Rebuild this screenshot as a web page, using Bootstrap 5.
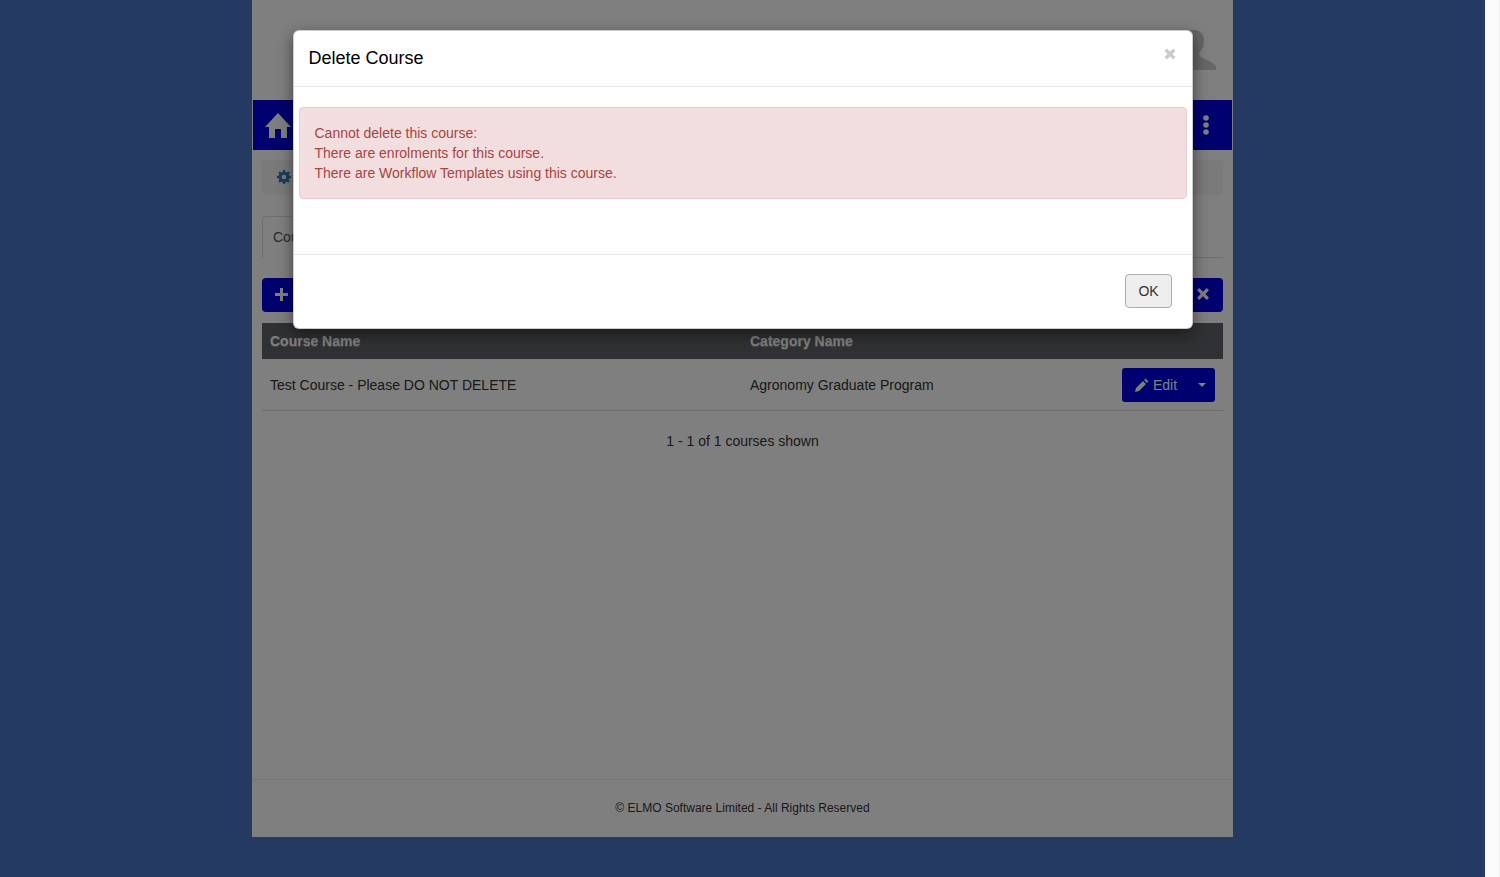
<!DOCTYPE html>
<html lang="en">
<head>
    <meta charset="UTF-8">
    <title>Delete Course</title>
    <link href="https://cdn.jsdelivr.net/npm/bootstrap@5.3.0/dist/css/bootstrap.min.css" rel="stylesheet">
    <style>
        html, body { height: 100%; overflow: hidden; }
        body { background: #fafafa; border-right: 1px solid #eee; font-family: "Liberation Sans", Arial, sans-serif; font-size: 14px; color: #333; }
        .page-bg { background: #253a62; width: 1485px; height: 877px; }
        .app-wrap { width: 981px; height: 837px; margin: 0 auto; background: #fff; position: relative; display: flex; flex-direction: column; }
        .top-head { height: 100px; padding: 30px 17px 0 0; }
        .main-bar { height: 50px; margin: 0 1px; background: #0000df; padding: 0 23px 0 12px; color: #fff; }
        .main-bar svg { fill: #fff; display: block; }
        .content-area { padding: 10px 10px 0; flex-grow: 1; }
        .crumb-bar { height: 35px; background: #f5f5f5; border-radius: 4px; padding: 0 15px; color: #337ab7; }
        .crumb-bar svg { margin-bottom: 1px; }
        .tab-row { height: 42px; margin-top: 21px; border-bottom: 1px solid #ddd; }
        .tab-item { height: 42px; width: 170px; padding: 10px; border: 1px solid #ddd; border-bottom-color: #fff; border-radius: 4px 4px 0 0; font-size: 14px; line-height: 20px; color: #555; }
        .tool-row { margin-top: 20px; height: 34px; }
        .tool-btn { width: 38px; height: 34px; background: #0000df; border-radius: 4px; }
        .tool-btn svg { fill: #fff; margin-bottom: 2px; }
        .tool-btn .x-icon { margin-right: 2px; }
        .course-grid { margin-top: 11px; margin-bottom: 0; font-size: 14px; line-height: 20px; table-layout: fixed; }
        .course-grid thead th { background: #606269; color: #fff; height: 36px; padding: 8px; font-weight: 700; border: 0; text-shadow: 0 1px 1px rgba(255,255,255,.35); }
        .course-grid td { height: 51px; padding: 9px 8px 7px; vertical-align: middle; border-bottom: 1px solid #ddd; background: #fff; color: #333; }
        .edit-group { width: 93px; height: 34px; background: #0000df; border-radius: 3px; color: #fff; padding: 0 9px 0 13px; font-size: 14px; }
        .edit-group svg { fill: #fff; }
        .caret-down { width: 0; height: 0; border-left: 4px solid transparent; border-right: 4px solid transparent; border-top: 4px solid #fff; }
        .page-count { margin-top: 20px; line-height: 20px; text-align: center; color: #333; }
        .foot-line { height: 58px; border-top: 1px solid #eee; font-size: 12px; text-align: center; color: #333; padding-top: 20px; line-height: 17px; }
        .dim-layer { position: absolute; inset: 0; background: rgba(0,0,0,.5); }
        .dialog-box { position: absolute; left: 41px; top: 30px; width: 900px; height: 299px; background: #fff; border: 1px solid rgba(0,0,0,.2); border-radius: 6px; box-shadow: 0 5px 15px rgba(0,0,0,.5); background-clip: border-box; }
        .dialog-box .modal-header { height: 56px; padding: 15px 15px 15px 14.5px; border-bottom: 1px solid #e5e5e5; border-radius: 0; align-items: flex-start; }
        .dialog-box .modal-title { font-size: 18px; line-height: 24px; color: #000; font-weight: 400; margin-top: 0; }
        .x-close { position: absolute; right: 16px; top: 17px; width: 12px; height: 12px; fill: #ccc; }
        .dialog-box .modal-body { height: 167px; padding: 20px 5px 0; flex: none; }
        .dialog-box .alert-danger { height: 92px; padding: 15px 15px 15px 14.5px; margin: 0; background: #f2dede; border: 1px solid #ebccd1; border-radius: 4px; color: #a94442; font-size: 14px; line-height: 20px; }
        .dialog-box .modal-footer { height: 74px; padding: 19px 20px 0 0; border-top: 1px solid #e5e5e5; align-items: flex-start; flex: none; }
        .ok-btn { width: 47px; height: 34px; margin: 0; padding: 0; font-size: 14px; color: #333; background: #eee; border: 1px solid #adadad; border-radius: 4px; }
    </style>
</head>
<body>
    <div class="page-bg">
        <div class="app-wrap">
            <!-- header -->
            <div class="top-head d-flex justify-content-end">
                <svg width="44" height="40" viewBox="0 0 44 40" fill="#ccc"><path d="M22 0c7 0 10 5 10 11 0 5-2 9-5 12 0 3 3 5 8 7 5 2 7 4 9 6v4H0V0z"/></svg>
            </div>
            <div class="main-bar d-flex align-items-center justify-content-between">
                <svg width="26" height="25" viewBox="0 0 26 25"><path d="M13 0 0 14h4v11h6v-9h6v9h6V14h4z"/></svg>
                <svg width="6" height="20" viewBox="0 0 6 20"><circle cx="3" cy="3" r="2.800"/><circle cx="3" cy="10" r="2.800"/><circle cx="3" cy="17" r="2.800"/></svg>
            </div>
            <div class="content-area">
                <div class="crumb-bar d-flex align-items-center">
                    <svg width="14" height="14" viewBox="0 0 14 14" fill="#337ab7"><path fill-rule="evenodd" d="M6 0h2l.4 1.900 1.400.6L11.500 1.400 12.900 2.800 11.800 4.400l.5 1.300 1.700.4v2l-1.800.4-.5 1.300 1 1.600-1.400 1.400-1.600-1-1.300.5L8 14H6l-.4-1.700-1.300-.5-1.600 1-1.400-1.400 1-1.600-.5-1.300L0 8V6l1.800-.4.500-1.300-1-1.500L2.700 1.400l1.500 1 1.400-.5zM7 4.700a2.300 2.300 0 1 0 0 4.600 2.300 2.300 0 0 0 0-4.600z"/></svg>
                </div>
                <div class="tab-row"><div class="tab-item">Courses</div></div>
                <div class="tool-row d-flex justify-content-between">
                    <div class="tool-btn d-flex align-items-center justify-content-center">
                        <svg width="13" height="13" viewBox="0 0 13 13"><path d="M5 0h3v5h5v3H8v5H5V8H0V5h5z"/></svg>
                    </div>
                    <div class="tool-btn d-flex align-items-center justify-content-center">
                        <svg class="x-icon" width="12" height="12" viewBox="0 0 12 12"><path d="M2.300 0 6 3.700 9.700 0 12 2.300 8.300 6 12 9.700 9.700 12 6 8.300 2.300 12 0 9.700 3.700 6 0 2.300z"/></svg>
                    </div>
                </div>
                <table class="table course-grid">
                    <colgroup><col style="width:480px"><col><col style="width:109px"></colgroup>
                    <thead><tr><th>Course Name</th><th>Category Name</th><th></th></tr></thead>
                    <tbody>
                        <tr>
                            <td>Test Course - Please DO NOT DELETE</td>
                            <td>Agronomy Graduate Program</td>
                            <td>
                                <div class="edit-group d-flex align-items-center">
                                    <svg class="me-1" width="14" height="14" viewBox="0 0 14 14"><path d="M10.500.5 13.500 3.500 12 5 9 2zM8 3l3 3-7 7-4 1 1-4z"/></svg>
                                    <span>Edit</span>
                                    <span class="caret-down ms-auto"></span>
                                </div>
                            </td>
                        </tr>
                    </tbody>
                </table>
                <div class="page-count">1 - 1 of 1 courses shown</div>
            </div>
            <div class="foot-line">© ELMO Software Limited - All Rights Reserved</div>
            <div class="dim-layer"></div>
            <!-- dialog -->
            <div class="dialog-box modal-content">
                <div class="modal-header">
                    <h4 class="modal-title">Delete Course</h4>
                    <svg class="x-close" viewBox="0 0 13 13.600"><path d="M3 .5 6.500 4 10 .5 12.800 3.300 9.300 6.800 12.800 10.300 10 13.100 6.500 9.600 3 13.100 .2 10.300 3.700 6.800 .2 3.300z"/></svg>
                </div>
                <div class="modal-body">
                    <div class="alert alert-danger">Cannot delete this course:<br>There are enrolments for this course.<br>There are Workflow Templates using this course.</div>
                </div>
                <div class="modal-footer">
                    <button type="button" class="btn ok-btn">OK</button>
                </div>
            </div>
        </div>
    </div>
    <script src="https://cdn.jsdelivr.net/npm/bootstrap@5.3.0/dist/js/bootstrap.bundle.min.js"></script>
</body>
</html>
